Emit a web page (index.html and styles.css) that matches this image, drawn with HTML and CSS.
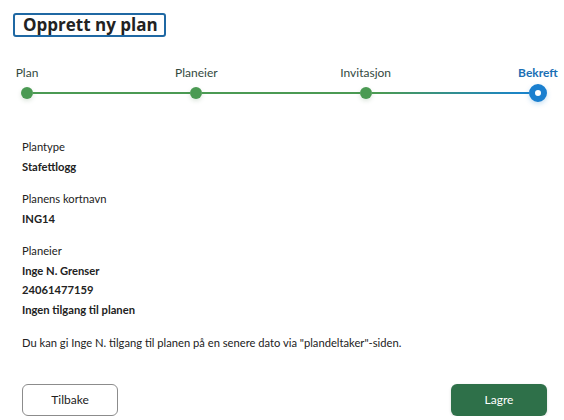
FILE: index.html
```html
<!DOCTYPE html>
<html>
    <head>
        <title>Opprett ny plan</title>
        <link rel="stylesheet" href="styles.css">
    </head>
    <body>
        <div class="page">
            <h1 class="title">Opprett ny plan</h1>

            <div class="steps">
                <div class="step done">
                    <span class="step-label">Plan</span>
                    <span class="dot-box"><span class="dot"></span></span>
                </div>
                <div class="bar"></div>
                <div class="step done">
                    <span class="step-label">Planeier</span>
                    <span class="dot-box"><span class="dot"></span></span>
                </div>
                <div class="bar"></div>
                <div class="step done">
                    <span class="step-label">Invitasjon</span>
                    <span class="dot-box"><span class="dot"></span></span>
                </div>
                <div class="bar bar-last"></div>
                <div class="step last active">
                    <span class="step-label">Bekreft</span>
                    <span class="dot-box"><span class="dot"></span></span>
                </div>
            </div>

            <div class="summary">
                <div class="field">
                    <div class="field-label">Plantype</div>
                    <div class="field-value">Stafettlogg</div>
                </div>
                <div class="field">
                    <div class="field-label">Planens kortnavn</div>
                    <div class="field-value">ING14</div>
                </div>
                <div class="field">
                    <div class="field-label">Planeier</div>
                    <div class="field-value">Inge N. Grenser</div>
                    <div class="field-value">24061477159</div>
                    <div class="field-value">Ingen tilgang til planen</div>
                </div>
                <p class="note">Du kan gi Inge N. tilgang til planen på en senere dato via "plandeltaker"-siden.</p>
            </div>

            <div class="actions">
                <button class="btn btn-back">Tilbake</button>
                <button class="btn btn-save">Lagre</button>
            </div>
        </div>
    </body>
</html>
```

FILE: styles.css
```css
* {
    margin: 0;
    padding: 0;
    box-sizing: border-box;
}

body {
    background: #ffffff;
    font-family: Lato, "Open Sans", sans-serif;
    color: #222222;
}

.page {
    padding: 13px 17px 0 13px;
}

.title {
    display: inline-block;
    border: 2px solid #1f68a3;
    border-radius: 3px;
    padding: 0 6px 0 8px;
    font-family: "Open Sans", sans-serif;
    font-size: 17px;
    line-height: 20px;
    font-weight: 700;
    color: #222222;
}

/* stepper */
.steps {
    display: flex;
    align-items: flex-end;
    margin: 28px 0 0 8px;
}

.step {
    display: flex;
    flex-direction: column;
    align-items: center;
    width: 12px;
}

.step.last {
    width: 18px;
}

.step-label {
    white-space: nowrap;
    font-size: 12px;
    line-height: 16px;
    color: #33493e;
    margin-bottom: 3px;
}

.step.active .step-label {
    color: #1b6fb5;
    font-weight: 700;
}

.dot-box {
    display: flex;
    align-items: center;
    justify-content: center;
    height: 18px;
}

.dot {
    display: block;
    width: 12px;
    height: 12px;
    border-radius: 50%;
    background: #4b9a53;
    box-shadow: 0 2px 4px rgba(60, 110, 60, 0.18);
}

.step.active .dot {
    width: 18px;
    height: 18px;
    border: 6px solid #1a7fcf;
    background: #ffffff;
    box-shadow: 0 2px 5px rgba(26, 127, 207, 0.25);
}

.bar {
    flex: 1;
    height: 2px;
    margin-bottom: 8px;
    background: #4b9a53;
}

.bar-last {
    background: linear-gradient(to right, #4b9a53 5%, #1a84c9 95%);
}

/* summary */
.summary {
    padding-left: 9px;
    margin-top: 35px;
    font-size: 11.2px;
    line-height: 19.5px;
}

.field {
    margin-bottom: 13px;
}

.field-value {
    font-weight: 700;
}

.note {
    margin-top: 14px;
}

/* buttons */
.actions {
    display: flex;
    justify-content: space-between;
    padding-left: 9px;
    margin-top: 31px;
}

.btn {
    width: 96px;
    height: 32px;
    border-radius: 6px;
    font-family: Lato, "Open Sans", sans-serif;
    font-size: 12px;
    cursor: pointer;
}

.btn-back {
    background: #ffffff;
    border: 1px solid #8c8c8c;
    color: #222222;
}

.btn-save {
    background: #2e7049;
    border: none;
    color: #ffffff;
    box-shadow: 0 1px 3px rgba(0, 0, 0, 0.15);
}
```
